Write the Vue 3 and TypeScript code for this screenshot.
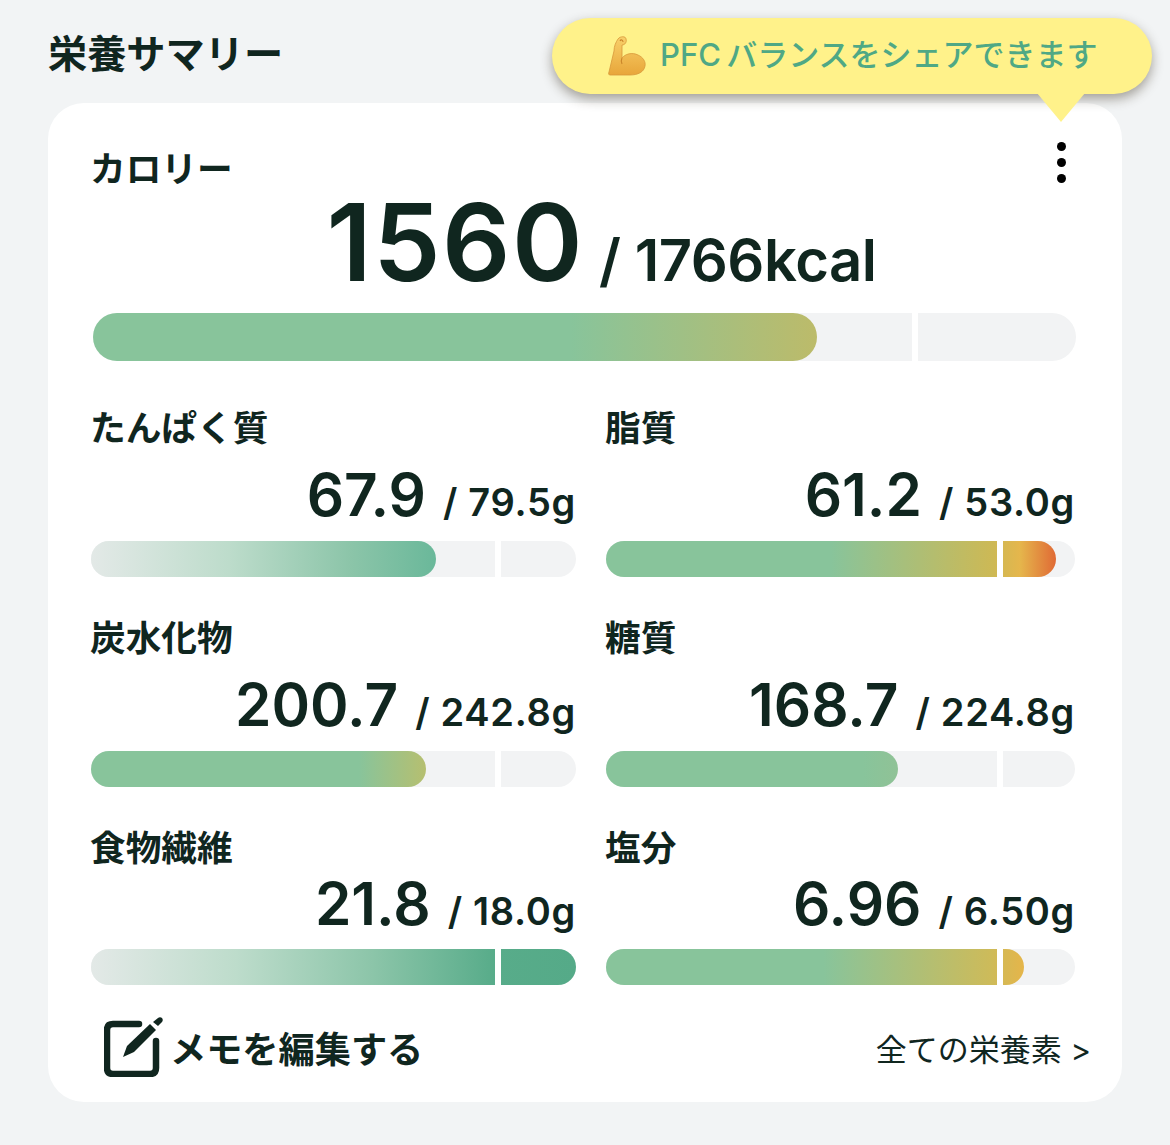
<script setup lang="ts">
interface Nutrient {
  label: string
  value: string
  goal: string
  fill: number
  kind: string
  tight?: boolean
}

const nutrients: Nutrient[] = [
  { label: 'たんぱく質', value: '67.9', goal: '79.5g', fill: 71.2, kind: 'protein' },
  { label: '脂質', value: '61.2', goal: '53.0g', fill: 96, kind: 'fat' },
  { label: '炭水化物', value: '200.7', goal: '242.8g', fill: 69, kind: 'carb' },
  { label: '糖質', value: '168.7', goal: '224.8g', fill: 62.3, kind: 'sugar' },
  { label: '食物繊維', value: '21.8', goal: '18.0g', fill: 100, kind: 'fiber', tight: true },
  { label: '塩分', value: '6.96', goal: '6.50g', fill: 89.1, kind: 'salt', tight: true },
]
</script>

<template>
  <div class="page">
    <h1 class="title">栄養サマリー</h1>

    <div class="tip">
      <svg class="muscle" viewBox="0 0 38 40" width="38" height="40">
        <defs>
          <linearGradient id="arm" x1="0" y1="0" x2="0" y2="1">
            <stop offset="0" stop-color="#f8d06a" />
            <stop offset="1" stop-color="#e8a63a" />
          </linearGradient>
        </defs>
        <path
          fill="url(#arm)"
          stroke="#d8983a"
          stroke-width="0.8"
          d="M10 3 C12 0 18 0 18 3 C19 6 17 9 14 9 L14 22 C17 18 24 16 30 19 C35 21 38 26 37 30 C36 36 30 39 22 39 L2 39 C1 39 0 38 1 36 L6 15 C6 10 8 6 10 3 Z"
        />
        <path fill="none" stroke="#c9842a" stroke-width="1.1" d="M12 5 C13 3 15 4 15 6 M14 22 C13 24 13 26 14 28" />
      </svg>
      <span class="tip-text">PFC バランスをシェアできます</span>
    </div>

    <section class="card">
      <div class="head">
        <h2 class="label">カロリー</h2>
        <div class="more"><i></i><i></i><i></i></div>
      </div>
      <div class="total">
        <span class="total-num">1560</span>
        <span class="total-goal">/ 1766kcal</span>
      </div>
      <div class="bar bar-main">
        <div class="fill kind-main" style="width: 73.7%"></div>
        <span class="mark"></span>
      </div>

      <div class="grid">
        <div v-for="n in nutrients" :key="n.label" class="item" :class="{ tight: n.tight }">
          <h3 class="label">{{ n.label }}</h3>
          <div class="amount">
            <span class="num">{{ n.value }}</span>
            <span class="goal">/ {{ n.goal }}</span>
          </div>
          <div class="bar">
            <div class="fill" :class="'kind-' + n.kind" :style="{ width: n.fill + '%' }"></div>
            <span class="mark"></span>
          </div>
        </div>
      </div>

      <div class="foot">
        <div class="memo">
          <svg class="memo-icon" viewBox="0 0 60 60" width="60" height="60">
            <path
              fill="none"
              stroke="#10261f"
              stroke-width="6.5"
              stroke-linecap="round"
              stroke-linejoin="round"
              d="M35 7 H9 C5 7 3 9 3 13 V51 C3 55 5 57 9 57 H46 C50 57 52 55 52 51 V24"
            />
            <path fill="#10261f" d="M19 40 L23 29 L46 7 L52 13 L30 35 Z" />
            <path fill="#10261f" d="M49 5 L54 1 C55 0 57 0 58 1 C59 2 59 4 58 5 L54 9 Z" />
          </svg>
          <span class="memo-text">メモを編集する</span>
        </div>
        <a class="all">全ての栄養素 &gt;</a>
      </div>
    </section>
  </div>
</template>

<style>
html,
body {
  background: #f2f4f5;
}
</style>

<style scoped>
.page {
  position: relative;
  width: 1170px;
  height: 1145px;
  box-sizing: border-box;
  padding: 32px 48px 0;
  font-family: Inter, "Noto Sans CJK JP", sans-serif;
  color: #10261f;
  overflow: hidden;
}

.title {
  margin: 0 0 27px 0;
  font-size: 39.2px;
  line-height: 44px;
  font-weight: 700;
}

.tip {
  position: absolute;
  left: 552px;
  top: 18px;
  width: 600px;
  height: 76px;
  box-sizing: border-box;
  padding: 0 0 7px 56px;
  display: flex;
  align-items: center;
  gap: 14px;
  background: #fff28a;
  border-radius: 38px;
  box-shadow: 0 5px 12px rgba(50, 40, 25, 0.42);
  z-index: 2;
}

.muscle {
  margin-top: 7px;
}

.tip::after {
  content: "";
  position: absolute;
  left: 485px;
  top: 75px;
  border-left: 24px solid transparent;
  border-right: 24px solid transparent;
  border-top: 29px solid #fff28a;
}

.tip-text {
  color: #4fa885;
  font-size: 31px;
  font-weight: 500;
  white-space: nowrap;
  word-spacing: -3px;
}

.card {
  width: 1074px;
  height: 999px;
  box-sizing: border-box;
  padding: 41px 46px 0 43px;
  background: #fff;
  border-radius: 36px;
}

.head {
  display: flex;
  justify-content: space-between;
  height: 50px;
}

.label {
  margin: 0 0 0 -1px;
  font-size: 35.7px;
  line-height: 50px;
  font-weight: 700;
}

.more {
  display: flex;
  flex-direction: column;
  gap: 7px;
  margin: -2px 10px 0 0;
}

.more i {
  width: 9px;
  height: 9px;
  border-radius: 50%;
  background: #000;
}

.total {
  display: flex;
  justify-content: center;
  align-items: baseline;
  gap: 15px;
  height: 100px;
  margin: -2px 0 21px;
  padding-left: 36px;
}

.total-num {
  font-size: 107px;
  line-height: 100px;
  font-weight: 600;
  letter-spacing: 1.5px;
}

.total-goal {
  font-size: 58px;
  line-height: 100px;
  font-weight: 600;
  letter-spacing: -0.5px;
}

.bar {
  position: relative;
  height: 36px;
  border-radius: 18px;
  background: #f2f3f4;
}

.bar-main {
  height: 48px;
  margin-left: 2px;
  border-radius: 24px;
}

.fill {
  height: 100%;
  border-radius: inherit;
}

.mark {
  position: absolute;
  top: 0;
  bottom: 0;
  left: 83.3%;
  width: 6px;
  background: #fff;
}

.kind-main {
  background: linear-gradient(90deg, #88c49b 66%, #bcbb6a 100%);
}

.kind-protein {
  background: linear-gradient(90deg, #e3e9e7 0%, #bddccb 40%, #8cc5a9 75%, #6ab89a 100%);
}

.kind-fat {
  background: linear-gradient(90deg, #88c49b 50%, #cdb955 86%, #e5b64c 92%, #e06a35 100%);
}

.kind-carb {
  background: linear-gradient(90deg, #88c49b 80%, #b6bf70 100%);
}

.kind-sugar {
  background: linear-gradient(90deg, #88c49b 88%, #90c296 100%);
}

.kind-fiber {
  background: linear-gradient(90deg, #e3e9e7 0%, #bddccb 30%, #8cc5a9 58%, #58ac8a 83%, #55aa88 100%);
}

.kind-salt {
  background: linear-gradient(90deg, #88c49b 52%, #cdbb5a 92%, #e5b54a 100%);
}

.grid {
  display: grid;
  grid-template-columns: 485px 469px;
  column-gap: 30px;
  margin-top: 42px;
}

.item {
  height: 210px;
}

.item.tight {
  height: auto;
}

.amount {
  display: flex;
  justify-content: flex-end;
  align-items: baseline;
  gap: 17px;
  box-sizing: border-box;
  height: 88px;
  padding: 4px 0 0 0;
}

.num {
  font-size: 58.5px;
  line-height: 76px;
  font-weight: 600;
}

.goal {
  font-size: 38px;
  line-height: 76px;
  font-weight: 600;
  letter-spacing: 0.7px;
}

.tight .amount {
  height: 87px;
  margin-top: -11px;
}

.foot {
  display: flex;
  justify-content: space-between;
  align-items: center;
  margin-top: 32px;
  padding: 0 0 0 13px;
  margin-right: -15px;
}

.memo {
  display: flex;
  align-items: center;
  gap: 6px;
}

.memo-text {
  font-size: 36.2px;
  font-weight: 700;
}

.all {
  font-size: 31px;
  font-weight: 400;
}
</style>
